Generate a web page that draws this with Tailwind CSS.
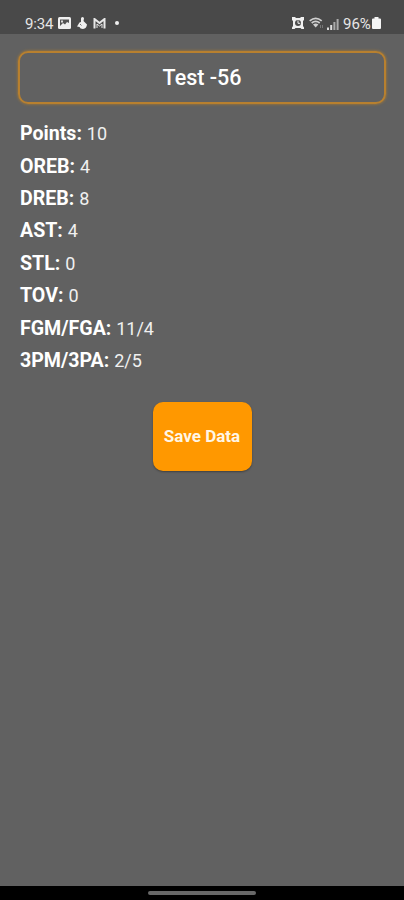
<!DOCTYPE html>
<html lang="en">

<head>
    <meta charset="UTF-8">
    <meta name="viewport" content="width=device-width, initial-scale=1.0">
    <title>Player Stats</title>
    <script src="https://cdn.jsdelivr.net/npm/@tailwindcss/browser@4"></script>
</head>

<body class="bg-[#616161] text-white font-['Roboto',sans-serif]">
    <div class="flex flex-col h-[900px] w-full overflow-hidden">

        <!-- status bar -->
        <header class="flex items-start justify-between h-[34px] pt-[14px] pl-[25px] pr-[23px] bg-[#494949] text-[#e6e6e6] shrink-0">
            <div class="flex items-center h-5">
                <span class="text-[15px] w-7 tracking-[-0.2px] leading-5">9:34</span>
                <svg class="w-[13px] h-3 ml-[5px] mb-[2px]" viewBox="0 0 13 12">
                    <rect width="13" height="12" rx="1.5" fill="#f0f0f0" />
                    <path d="M2 2.500h9V6L9 5 7 7.500 5 6 2 9z" fill="#555" />
                    <path d="M3 3.500h2v2H3z" fill="#ddd" />
                </svg>
                <svg class="w-[10px] h-3 ml-[6px] mb-[2px]" viewBox="0 0 10 12" fill="#f0f0f0">
                    <path d="M4 1.500Q4 0 5.500 0T7 1.500L6.500 4 8 5.500 10 7.500Q9.500 11.500 6 12 3 12 2.500 10L0 9.500 2.500 5.500 4 5z" />
                    <path d="M3 7l1.500 1.500" stroke="#555" stroke-width=".8" />
                </svg>
                <svg class="w-[13px] h-[11px] ml-[6px] mb-px" viewBox="0 0 13 11" fill="none" stroke="#e8e8e8">
                    <path d="M1.500 10.500V1l5 4 5-4v9.500" stroke-width="2" />
                    <path d="M4 10V6l2.500 2L9 6v4" stroke-width="1" />
                </svg>
                <span class="w-1 h-1 ml-[9px] mb-[2px] rounded-full bg-[#f0f0f0]"></span>
            </div>
            <div class="flex items-center h-5">
                <svg class="w-3 h-3 mb-[2px]" viewBox="0 0 12 12">
                    <path d="M0 0h3l1 1h4l1-1h3v3l-1 1v5l1 1.500V12H9.500L8.500 11h-5L2.500 12H0v-1.500L1 9V4L0 3z" fill="#f0f0f0" />
                    <circle cx="6" cy="6" r="3" fill="#4d4d4d" />
                    <path d="M6 3.500v2.800h2.200" stroke="#f0f0f0" stroke-width="1" fill="none" />
                </svg>
                <svg class="w-[15px] h-3 ml-[5px] mb-[2px]" viewBox="0 0 15 12" fill="none" stroke="#cfcfcf" stroke-width="1.700">
                    <path d="M.7 3.800q6-5 12 0M2.700 6q4-3.400 8 0" />
                    <path d="M4 7.500q2.700-2 5.400 0L6.700 10.500z" fill="#cfcfcf" stroke="none" />
                    <path d="M11.500 8v3M13.500 8v3" stroke="#777" stroke-width="1" />
                </svg>
                <svg class="w-3 h-3 ml-[3px] mb-px" viewBox="0 0 12 12">
                    <path d="M0 9.500h2V12H0zM3.200 7h2v5h-2z" fill="#dedede" />
                    <path d="M6.400 4h2v8h-2zM9.600 1h2v11h-2z" fill="#aaa" />
                </svg>
                <span class="text-[15px] w-[28px] ml-1 leading-5">96%</span>
                <svg class="w-[9px] h-3 ml-[1px] mb-[2px]" viewBox="0 0 9 12">
                    <path d="M2.500 0h4v1.500H8q1 0 1 1V11q0 1-1 1H1q-1 0-1-1V2.500q0-1 1-1h1.500z" fill="#f5f5f5" />
                </svg>
            </div>
        </header>

        <main class="flex flex-col flex-1 px-[18px] pt-[17px]">
            <div class="flex items-center justify-center h-[53px] rounded-[10px] border-2 border-[#b8802f] shadow-[0_0_3px_#b98028]">
                <h1 class="text-[21.500px] font-medium leading-6 pt-px">Test -56</h1>
            </div>

            <div class="flex flex-col mt-[14px] pl-[2px] text-[18px] text-[#f0f0f0]">
                <p class="flex items-center h-[32.430px] leading-[32px] whitespace-pre"><b class="text-[19.600px] font-bold text-white">Points: </b><span>10</span></p>
                <p class="flex items-center h-[32.430px] leading-[32px] whitespace-pre"><b class="text-[19.600px] font-bold text-white">OREB: </b><span>4</span></p>
                <p class="flex items-center h-[32.430px] leading-[32px] whitespace-pre"><b class="text-[19.600px] font-bold text-white">DREB: </b><span>8</span></p>
                <p class="flex items-center h-[32.430px] leading-[32px] whitespace-pre"><b class="text-[19.600px] font-bold text-white">AST: </b><span>4</span></p>
                <p class="flex items-center h-[32.430px] leading-[32px] whitespace-pre"><b class="text-[19.600px] font-bold text-white">STL: </b><span>0</span></p>
                <p class="flex items-center h-[32.430px] leading-[32px] whitespace-pre"><b class="text-[19.600px] font-bold text-white">TOV: </b><span>0</span></p>
                <p class="flex items-center h-[32.430px] leading-[32px] whitespace-pre"><b class="text-[19.600px] font-bold text-white">FGM/FGA: </b><span>11/4</span></p>
                <p class="flex items-center h-[32.430px] leading-[32px] whitespace-pre"><b class="text-[19.600px] font-bold text-white">3PM/3PA: </b><span>2/5</span></p>
            </div>

            <button type="button" class="self-center w-[99px] h-[69px] mt-[24.500px] rounded-[10px] bg-[#ff9800] text-[17px] text-[#fff6e6] font-bold whitespace-nowrap shadow-[0_1px_2px_rgba(0,0,0,0.35)]">Save Data</button>
        </main>

        <!-- gesture bar -->
        <footer class="flex justify-center h-[14px] pt-[5px] bg-black shrink-0">
            <div class="w-[108px] h-[4px] rounded-full bg-[#686868]"></div>
        </footer>
    </div>
</body>

</html>
